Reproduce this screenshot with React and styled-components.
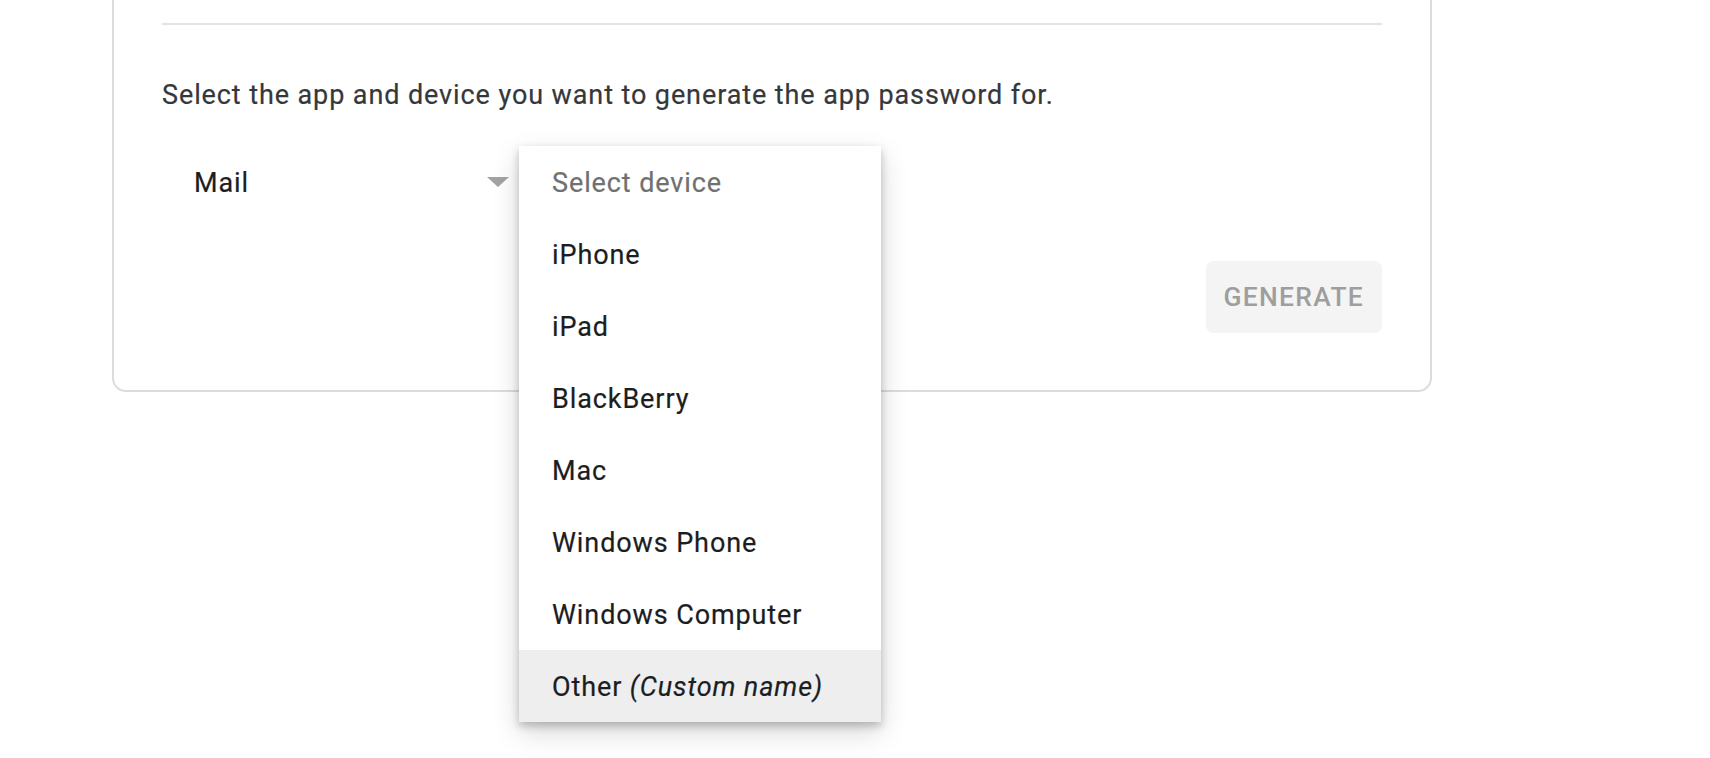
import styled, { createGlobalStyle } from 'styled-components';

const GlobalStyle = createGlobalStyle`
    body {
        margin: 0;
        background: #ffffff;
        font-family: Roboto, "Noto Sans", Arial, sans-serif;
    }
`;

const Page = styled.div`
    padding-left: 112px;
    width: 1320px;
    min-height: 758px;
`;

const Card = styled.div`
    border: 2px solid #dadce0;
    border-top: none;
    border-radius: 0 0 14px 14px;
    padding: 23px 48px 57px 48px;
    background: #fff;
`;

const Divider = styled.div`
    height: 2px;
    background: #e3e3e3;
`;

const Description = styled.p`
    margin: 50px 0 0 0;
    font-size: 27px;
    line-height: 40px;
    color: #35383b;
    letter-spacing: 0.9px;
    -webkit-text-stroke: 0.2px #35383b;
`;

const SelectRow = styled.div`
    display: flex;
    margin-top: 31px;
    height: 72px;
`;

const SelectField = styled.div`
    display: flex;
    align-items: center;
    width: ${p => p.width}px;
    height: 72px;
    padding: 2px 0 0 32px;
    box-sizing: border-box;
    font-size: 27px;
    letter-spacing: 0.9px;
    color: #1c1d1f;
    -webkit-text-stroke: 0.2px #1c1d1f;
    position: relative;
`;

const SelectValue = styled.span`
    flex: 1;
`;

const Arrow = styled.span`
    width: 0;
    height: 0;
    border-left: 11.5px solid transparent;
    border-right: 11.5px solid transparent;
    border-top: 10px solid #a3a3a3;
    margin: -2px 10px 0 0;
`;

const Menu = styled.ul`
    position: absolute;
    top: 0;
    left: 0;
    width: 362px;
    margin: 0;
    padding: 0;
    list-style: none;
    background: #fff;
    z-index: 5;
    box-shadow: 0 4px 8px rgba(0, 0, 0, 0.22), 0 10px 26px rgba(0, 0, 0, 0.16);
`;

const MenuItem = styled.li`
    height: 72px;
    line-height: 74px;
    padding-left: 33px;
    font-size: 27px;
    letter-spacing: 0.9px;
    color: ${p => (p.$placeholder ? '#707070' : '#1c1d1f')};
    -webkit-text-stroke: 0.2px ${p => (p.$placeholder ? '#707070' : '#1c1d1f')};
    background: ${p => (p.$active ? '#eeeeee' : 'transparent')};
    white-space: nowrap;
`;

const Actions = styled.div`
    display: flex;
    justify-content: flex-end;
    margin-top: 43px;
`;

const GenerateButton = styled.button`
    height: 72px;
    padding: 0 18px;
    border: none;
    border-radius: 7px;
    background: #f4f4f4;
    color: #9e9e9e;
    font-family: Roboto, "Noto Sans", Arial, sans-serif;
    font-size: 26.4px;
    font-weight: 500;
    letter-spacing: 1.3px;
    text-transform: uppercase;
`;

const devices = ['iPhone', 'iPad', 'BlackBerry', 'Mac', 'Windows Phone', 'Windows Computer'];

const App = () => {
    return (
        <Page>
            <GlobalStyle />
            <Card>
                <Divider />
                <Description>Select the app and device you want to generate the app password for.</Description>
                <SelectRow>
                    <SelectField width={357}>
                        <SelectValue>Mail</SelectValue>
                        <Arrow />
                    </SelectField>
                    <SelectField width={362}>
                        <Menu>
                            <MenuItem $placeholder>Select device</MenuItem>
                            {devices.map(d => (
                                <MenuItem key={d}>{d}</MenuItem>
                            ))}
                            <MenuItem $active>Other <em>(Custom name)</em></MenuItem>
                        </Menu>
                    </SelectField>
                </SelectRow>
                <Actions>
                    <GenerateButton disabled>Generate</GenerateButton>
                </Actions>
            </Card>
        </Page>
    );
};

export default App;
